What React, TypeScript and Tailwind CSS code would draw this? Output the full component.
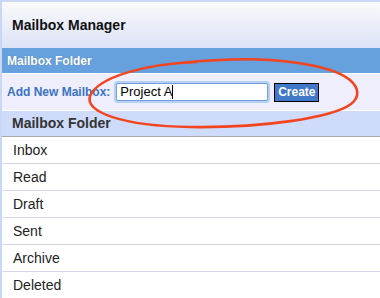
import React from "react";

const rows = ["Inbox", "Read", "Draft", "Sent", "Archive", "Deleted"];

export default function App() {
  return (
    <div
      className="relative w-[380px] h-[298px] overflow-hidden bg-white"
      style={{ fontFamily: '"Liberation Sans", Arial, sans-serif' }}
    >
      <div className="border-t-2 border-l-2 border-[#c9d6f4] h-full">
        <div className="h-[46px] bg-gradient-to-b from-[#fafafa] to-[#dce3f8] flex items-center pl-[10px]">
          <span className="text-[14px] font-bold text-[#111]">Mailbox Manager</span>
        </div>
        <div className="h-[26px] bg-[#66a0dd] flex items-center pl-[5px] border-b border-white">
          <span
            className="text-[12px] font-bold text-white"
            style={{ textShadow: "0 0 1px rgba(0,0,0,0.25)" }}
          >
            Mailbox Folder
          </span>
        </div>
        <div className="h-[37px] bg-[#eeeefc] flex items-center pl-[5px] border-b border-white">
          <span className="text-[12px] font-bold text-[#3b72c4]">Add New Mailbox:</span>
          <div className="ml-[6px] w-[152px] h-[18px] rounded-[2px] border border-[#6f9fe0] bg-white shadow-[0_0_0_2px_#b4d0f4] flex items-center pl-[3px]">
            <span className="text-[13px] text-black">Project A</span>
            <span className="w-px h-[14px] bg-black" />
          </div>
          <div className="ml-[6px] w-[45px] h-[19px] bg-[#4178c8] border border-black flex items-center justify-center">
            <span className="text-[12px] font-bold text-white">Create</span>
          </div>
        </div>
        <div className="h-[26px] bg-[#cfdbfb] border-b border-[#a8a8a8] flex items-center pl-[10px]">
          <span className="text-[14px] font-bold text-[#333]">Mailbox Folder</span>
        </div>
        {rows.map((r) => (
          <div
            key={r}
            className="h-[27px] border-b border-[#d8d5ec] flex items-center pl-[10px] border-l border-l-white"
          >
            <span className="text-[14px] text-[#222]">{r}</span>
          </div>
        ))}
      </div>
      <svg
        className="absolute left-0 top-0 pointer-events-none"
        width="380"
        height="298"
        viewBox="0 0 380 298"
      >
        <path
          d="M196,62 C145,64 98,77 90,96 C85,112 122,126 190,127 C262,128 332,118 351,104 C360,97 359,88 350,80 C338,70 310,63 270,60 C240,58 210,60 180,63"
          fill="none"
          stroke="#f2451f"
          strokeWidth="2.6"
          strokeLinecap="round"
        />
      </svg>
    </div>
  );
}
